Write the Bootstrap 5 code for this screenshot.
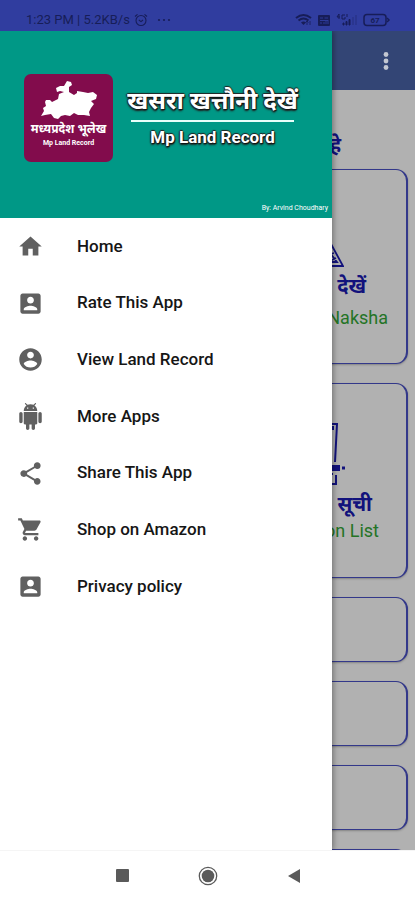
<!DOCTYPE html>
<html lang="en">
<head>
<meta charset="utf-8">
<meta name="viewport" content="width=device-width, initial-scale=1">
<title>Mp Land Record</title>
<link href="https://cdn.jsdelivr.net/npm/bootstrap@5.3.0/dist/css/bootstrap.min.css" rel="stylesheet">
<style>
body{font-family:Roboto,"Noto Sans","Noto Sans Devanagari",sans-serif;background:#fff}
.status-strip{height:31px;padding:8px 24px 0 26px;background:#303d9f;color:#171d58;font-size:13px;line-height:24px}
.status-strip svg{flex:none}
.page-under{background:#b1b1b1}
.app-top{height:59px;background:#334575;padding-right:17px}
.dots-btn{width:24px;height:32px;color:#c3c7d2}
.welcome{height:79px;padding:40px 74px 0 0;font-size:20px;line-height:30px;color:#12127c}
.tiles{padding:0 7px;gap:19px}
.tile{flex:none;border:1px solid #33388a;border-right-width:2px;border-radius:12px;box-shadow:0 1px 2px rgba(0,0,0,.25);color:#12127c;background:#b1b1b1}
.tile-tall{height:195px}
.tile-short{height:65px}
.tile-map{padding:73px 18px 0 0}
.tile-list{padding:37px 27px 0 0}
.tile-hi{font-size:20px;line-height:30px}
.tile-en{font-size:18px;color:#247426}
.lh-map{line-height:34px}
.lh-list{line-height:24px}
.pe-hi-map{padding-right:22px}
.pe-hi-list{padding-right:7px}
.pe-art-map{padding-right:44px}
.pe-art-list{padding-right:34px}
.drawer{width:80%;box-shadow:2px 0 5px rgba(0,0,0,.3)}
.drawer-head{height:187px;background:#009886;padding:43px 4px 4px 24px}
.app-logo{width:89px;height:88px;border-radius:7px;background:#820c4c;padding-top:6px}
.logo-hi{font-size:12px;line-height:18px}
.logo-en{font-size:7px;line-height:10px}
.title-block{margin:9px 28px 0 12px;text-shadow:1px 1px 1px #111,-1px 0 1px #222,0 -1px 1px #222,0 2px 2px #222}
.title-hi{font-size:24px;line-height:37px}
.title-rule{height:2px;width:163px;background:#e8fffa}
.title-en{font-size:17px;line-height:30px}
.credit{font-size:7px;line-height:12px}
.menu-rows{display:grid;grid-auto-rows:1fr;height:397px}
.menu-rows a{padding-left:17px;gap:33px;font-size:17px;color:#161616}
.menu-rows svg{color:#606060}
.system-bar{height:50px;border-top:1px solid #f5f5f5;padding-left:109px;gap:60px}
.system-bar button{width:26px;height:26px;color:#5a5a5a}
</style>
<script src="https://cdn.jsdelivr.net/npm/bootstrap@5.3.0/dist/js/bootstrap.bundle.min.js"></script>
</head>
<body>
<div class="d-flex flex-column vh-100 overflow-hidden">
  <header class="status-strip d-flex align-items-center justify-content-between flex-shrink-0">
    <div class="d-flex align-items-center gap-1">
      <span>1:23 PM | 5.2KB/s</span>
      <svg width="14" height="14" viewBox="0 0 14 14" fill="none" stroke="currentColor" stroke-width="1.1"><circle cx="7" cy="7.5" r="5"/><path d="M1 3.5 3.5 1.3M13 3.5 10.5 1.3M4.8 7l2.2 1.6L9 7"/></svg>
      <svg class="ms-1" width="16" height="14" viewBox="0 0 16 14" fill="currentColor"><circle cx="3" cy="7" r="1.1"/><circle cx="8" cy="7" r="1.1"/><circle cx="13" cy="7" r="1.1"/></svg>
    </div>
    <svg width="96" height="16" viewBox="0 0 96 16" fill="none" stroke="currentColor">
      <path d="M1 6q7.500-6 15 0M3.500 8.500q5-4 10 0" stroke-width="2"/><path d="M6 10.500q2.500-2 5 0L8.500 13z" fill="currentColor" stroke="none"/><path d="M12 13V9m0 0-1.500 1.500M12 9l1.500 1.500M15 9v4" stroke-width=".8"/>
      <rect x="23" y="3" width="12" height="11" rx="1" fill="currentColor" stroke="none"/><path d="M25 6h3m1.500 0h3.500M25 8.500h8M25 11h2m2-1v2m2-3v3m2-4v4" stroke="#303d9f" stroke-width=".9"/>
      <path d="M44 2l-2 3h3M44 2v5M50 3h-3v4h3V5M52 2v3" stroke-width="1"/><path d="M48 13h1v-2h-1zM51 13h1V9.500h-1zM54 13h1V7.500h-1z" fill="currentColor"/><path d="M58 13V5M61 13V3" stroke-width="1" opacity=".45"/>
      <rect x="69" y="2.500" width="22" height="11" rx="3" stroke-width="1.500"/><path d="M92 6l2 2-2 2" stroke-width="1.500"/>
      <text x="80" y="11" font-size="8" font-weight="700" text-anchor="middle" fill="currentColor" stroke="none">67</text>
    </svg>
  </header>

  <div class="position-relative flex-grow-1 overflow-hidden">
    <main class="page-under h-100 overflow-hidden d-flex flex-column">
      <div class="app-top flex-shrink-0 d-flex align-items-center justify-content-end">
        <button type="button" class="dots-btn btn p-0 border-0 d-flex align-items-center justify-content-center" aria-label="More options"><svg width="6" height="20" viewBox="0 0 6 20" fill="currentColor"><circle cx="3" cy="3.500" r="2.400"/><circle cx="3" cy="10" r="2.400"/><circle cx="3" cy="16.500" r="2.400"/></svg></button>
      </div>
      <div class="welcome flex-shrink-0 text-end fw-bold">हे</div>
      <div class="tiles d-flex flex-column">
        <div class="tile tile-tall tile-map d-flex flex-column align-items-end">
          <svg class="pe-art-map" width="92" height="28" viewBox="0 0 48 28" fill="none" stroke="currentColor" stroke-width="1.800"><path d="M35 1 47 23H30M30 5l11 14H31M31 12l7-2M34 18l6-3"/></svg>
          <div class="tile-hi pe-hi-map fw-bold">देखें</div>
          <div class="tile-en lh-map">Naksha</div>
        </div>
        <div class="tile tile-tall tile-list d-flex flex-column align-items-end">
          <svg class="pe-art-list" width="82" height="68" viewBox="0 0 48 68" fill="none" stroke="currentColor" stroke-width="2"><path d="M28 3h12l-2 38M36 5v4M28 53h8M39 54v9H28"/><path d="M45 47h4" stroke-width="3"/><path d="M28 47h15" stroke-width="6"/></svg>
          <div class="tile-hi pe-hi-list fw-bold">सूची</div>
          <div class="tile-en lh-list">on List</div>
        </div>
        <div class="tile tile-short"></div>
        <div class="tile tile-short"></div>
        <div class="tile tile-short"></div>
        <div class="tile tile-short"></div>
      </div>
    </main>

    <aside class="drawer position-absolute top-0 start-0 h-100 bg-white">
      <div class="drawer-head d-flex flex-column justify-content-between text-white">
        <div class="d-flex">
          <div class="app-logo flex-shrink-0 text-center fw-bold d-flex flex-column align-items-center">
            <svg width="58" height="40" viewBox="0 0 58 40" fill="#fff"><path d="M1 36 4 31 3 28 6 26 5 22 6 20 10 20 12 22 18 19 19 14 24 12 20 11 17 12 16 8 20 6 24 6 27 1 31 2 32 5 29 7 29 12 34 15 37 13 37 11 43 12 48 13 53 12 57 15 56 19 51 21 54 24 51 28 49 32 50 36 44 35 38 35 34 33 30 36 25 35 21 36 18 39 14 38 11 34 5 35z"/></svg>
            <div class="logo-hi text-nowrap">मध्यप्रदेश भूलेख</div>
            <div class="logo-en">Mp Land Record</div>
          </div>
          <div class="title-block flex-grow-1 d-flex flex-column align-items-center text-nowrap fw-bold">
            <div class="title-hi">खसरा खत्तौनी देखें</div>
            <div class="title-rule"></div>
            <div class="title-en">Mp Land Record</div>
          </div>
        </div>
        <div class="credit text-end">By: Arvind Choudhary</div>
      </div>
      <nav class="menu-rows" aria-label="Main menu">
        <a href="#" class="d-flex align-items-center text-decoration-none fw-medium"><svg width="27" height="27" viewBox="0 0 24 24" fill="currentColor"><path d="M10 20v-6h4v6h5v-8h3L12 3 2 12h3v8z"/></svg>Home</a>
        <a href="#" class="d-flex align-items-center text-decoration-none fw-medium"><svg width="27" height="27" viewBox="0 0 24 24" fill="currentColor"><path d="M3 5v14c0 1.100.89 2 2 2h14c1.100 0 2-.9 2-2V5c0-1.100-.9-2-2-2H5c-1.110 0-2 .9-2 2zm12 4c0 1.660-1.340 3-3 3s-3-1.340-3-3 1.340-3 3-3 3 1.340 3 3zm-9 8c0-2 4-3.100 6-3.100s6 1.100 6 3.100v1H6v-1z"/></svg>Rate This App</a>
        <a href="#" class="d-flex align-items-center text-decoration-none fw-medium"><svg width="27" height="27" viewBox="0 0 24 24" fill="currentColor"><path d="M12 2C6.480 2 2 6.480 2 12s4.480 10 10 10 10-4.480 10-10S17.520 2 12 2zm0 3c1.660 0 3 1.340 3 3s-1.340 3-3 3-3-1.340-3-3 1.340-3 3-3zm0 14.200c-2.500 0-4.710-1.280-6-3.220.03-1.990 4-3.080 6-3.080 1.990 0 5.970 1.090 6 3.080-1.290 1.940-3.500 3.220-6 3.220z"/></svg>View Land Record</a>
        <a href="#" class="d-flex align-items-center text-decoration-none fw-medium"><svg width="27" height="27" viewBox="0 0 24 24" fill="currentColor"><path d="M6 18c0 .55.45 1 1 1h1v3.500c0 .83.67 1.500 1.500 1.500s1.500-.67 1.500-1.500V19h2v3.500c0 .83.67 1.500 1.500 1.500s1.500-.67 1.500-1.500V19h1c.55 0 1-.45 1-1V8H6v10zM3.500 8C2.670 8 2 8.670 2 9.500v7c0 .83.67 1.500 1.500 1.500S5 17.330 5 16.500v-7C5 8.670 4.330 8 3.500 8zm17 0c-.83 0-1.500.67-1.500 1.500v7c0 .83.67 1.500 1.500 1.500s1.500-.67 1.500-1.500v-7c0-.83-.67-1.500-1.500-1.500zm-4.970-5.840 1.300-1.300c.2-.2.2-.51 0-.71-.2-.2-.51-.2-.71 0l-1.480 1.480C13.850 1.230 12.950 1 12 1c-.96 0-1.860.23-2.660.63L7.850.15c-.2-.2-.51-.2-.71 0-.2.2-.2.51 0 .71l1.310 1.310C6.970 3.260 6 5.010 6 7h12c0-1.990-.97-3.750-2.470-4.840zM10 5H9V4h1v1zm5 0h-1V4h1v1z"/></svg>More Apps</a>
        <a href="#" class="d-flex align-items-center text-decoration-none fw-medium"><svg width="27" height="27" viewBox="0 0 24 24" fill="currentColor"><path d="M18 16.080c-.76 0-1.440.3-1.960.77L8.910 12.700c.05-.23.09-.46.09-.7s-.04-.47-.09-.7l7.050-4.110c.54.5 1.250.81 2.040.81 1.660 0 3-1.340 3-3s-1.340-3-3-3-3 1.340-3 3c0 .24.04.47.09.7L8.040 9.810C7.500 9.310 6.790 9 6 9c-1.660 0-3 1.340-3 3s1.340 3 3 3c.79 0 1.500-.31 2.040-.81l7.120 4.160c-.05.21-.08.43-.08.65 0 1.610 1.310 2.920 2.920 2.920s2.920-1.310 2.920-2.920-1.310-2.920-2.920-2.920z"/></svg>Share This App</a>
        <a href="#" class="d-flex align-items-center text-decoration-none fw-medium"><svg width="27" height="27" viewBox="0 0 24 24" fill="currentColor"><path d="M7 18c-1.100 0-1.990.9-1.990 2S5.900 22 7 22s2-.9 2-2-.9-2-2-2zM1 2v2h2l3.600 7.590-1.350 2.450c-.16.28-.25.61-.25.96 0 1.100.9 2 2 2h12v-2H7.420c-.14 0-.25-.11-.25-.25l.03-.12.9-1.630h7.450c.75 0 1.410-.41 1.750-1.030l3.580-6.490c.08-.14.12-.31.12-.48 0-.55-.45-1-1-1H5.210l-.94-2H1zm16 16c-1.100 0-1.990.9-1.990 2s.89 2 1.990 2 2-.9 2-2-.9-2-2-2z"/></svg>Shop on Amazon</a>
        <a href="#" class="d-flex align-items-center text-decoration-none fw-medium"><svg width="27" height="27" viewBox="0 0 24 24" fill="currentColor"><path d="M3 5v14c0 1.100.89 2 2 2h14c1.100 0 2-.9 2-2V5c0-1.100-.9-2-2-2H5c-1.110 0-2 .9-2 2zm12 4c0 1.660-1.340 3-3 3s-3-1.340-3-3 1.340-3 3-3 3 1.340 3 3zm-9 8c0-2 4-3.100 6-3.100s6 1.100 6 3.100v1H6v-1z"/></svg>Privacy policy</a>
      </nav>
    </aside>
  </div>

  <footer class="system-bar d-flex align-items-center flex-shrink-0 bg-white">
    <button type="button" class="btn p-0 border-0 d-flex align-items-center justify-content-center" aria-label="Recent apps"><svg width="13" height="13" viewBox="0 0 13 13"><rect width="13" height="13" rx="1" fill="currentColor"/></svg></button>
    <button type="button" class="btn p-0 border-0 d-flex align-items-center justify-content-center" aria-label="Home screen"><svg width="20" height="20" viewBox="0 0 20 20"><circle cx="10" cy="10" r="8.700" fill="none" stroke="currentColor" stroke-width="1.300"/><circle cx="10" cy="10" r="6.300" fill="currentColor"/></svg></button>
    <button type="button" class="btn p-0 border-0 d-flex align-items-center justify-content-center" aria-label="Back"><svg width="12" height="14" viewBox="0 0 12 14"><path d="M12 0v14L0 7z" fill="currentColor"/></svg></button>
  </footer>
</div>
</body>
</html>
